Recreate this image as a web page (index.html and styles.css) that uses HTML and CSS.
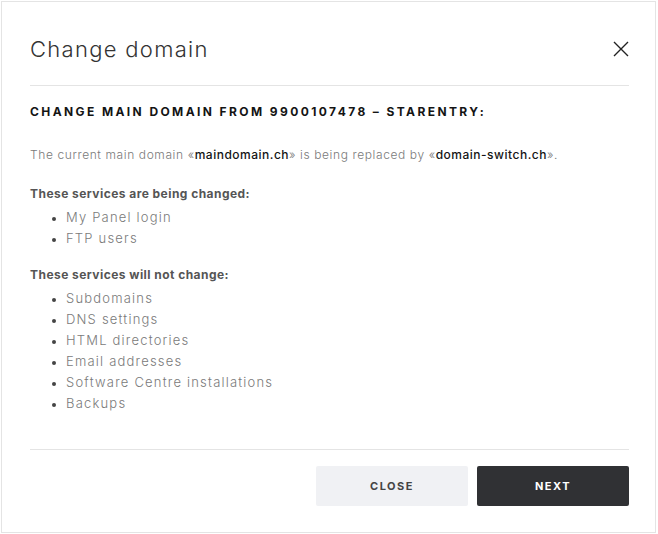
FILE: index.html
```html
<!DOCTYPE html>
<html lang="en">
<head>
  <meta charset="UTF-8" />
  <meta name="viewport" content="width=device-width, initial-scale=1.0"/>
  <title>Change domain</title>
  <link rel="stylesheet" href="styles.css">
</head>

<body>
  <div class="modal">
    <div class="modal-header">
      <h2 class="modal-title">Change domain</h2>
      <button class="modal-close" aria-label="Close">
        <svg width="16" height="16" viewBox="0 0 16 16">
          <path d="M1 1 L15 15 M15 1 L1 15" stroke="#222" stroke-width="1.4" fill="none"/>
        </svg>
      </button>
    </div>

    <div class="modal-body">
      <h3 class="section-title">Change main domain from 9900107478 – STARENTRY:</h3>
      <p class="intro">The current main domain «<strong>maindomain.ch</strong>» is being replaced by «<strong>domain-switch.ch</strong>».</p>

      <p class="group-title">These services are being changed:</p>
      <ul class="service-list">
        <li>My Panel login</li>
        <li>FTP users</li>
      </ul>

      <p class="group-title">These services will not change:</p>
      <ul class="service-list">
        <li>Subdomains</li>
        <li>DNS settings</li>
        <li>HTML directories</li>
        <li>Email addresses</li>
        <li>Software Centre installations</li>
        <li>Backups</li>
      </ul>
    </div>

    <div class="modal-footer">
      <button class="btn btn-light">Close</button>
      <button class="btn btn-dark">Next</button>
    </div>
  </div>
</body>
</html>
```

FILE: styles.css
```css
:root {
  --border: #e4e4e4;
  --text-dark: #141414;
  --text-muted: #7a7a7a;
  --text-label: #555;
  --btn-light: #f0f1f4;
  --btn-dark: #303134;
}

html, body {
  height: 100%;
}

body {
  margin: 0;
  padding: 1px 2px 1px 1px;
  box-sizing: border-box;
  background: #fff;
  font-family: Inter, "Liberation Sans", sans-serif;
}

.modal {
  height: 100%;
  box-sizing: border-box;
  border: 1px solid var(--border);
  padding: 0 26px 0 28px;
  display: flex;
  flex-direction: column;
}

/* Header */
.modal-header {
  display: flex;
  justify-content: space-between;
  align-items: center;
  padding: 33px 0 22px;
  border-bottom: 1px solid var(--border);
}

.modal-title {
  margin: 0;
  font-size: 22px;
  line-height: 28px;
  font-weight: 300;
  letter-spacing: 1.3px;
  color: #333;
}

.modal-close {
  background: none;
  border: none;
  padding: 0;
  width: 16px;
  height: 16px;
  cursor: pointer;
  display: flex;
}

/* Body */
.modal-body {
  padding-bottom: 35px;
  border-bottom: 1px solid var(--border);
}

.section-title {
  margin: 18px 0 0;
  font-size: 12px;
  line-height: 16px;
  font-weight: 700;
  letter-spacing: 2.4px;
  text-transform: uppercase;
  color: var(--text-dark);
}

.intro {
  margin: 26px 0 0;
  font-size: 12px;
  line-height: 18px;
  font-weight: 300;
  letter-spacing: 0.6px;
  color: var(--text-muted);
}

.intro strong {
  font-weight: 500;
  letter-spacing: 0.5px;
  color: var(--text-dark);
}

.group-title {
  margin: 21px 0 0;
  font-size: 12px;
  line-height: 18px;
  font-weight: 700;
  letter-spacing: 0.45px;
  color: var(--text-label);
}

.service-list + .group-title {
  margin-top: 17px;
}

.service-list {
  margin: 4px 0 0;
  padding-left: 36px;
  font-size: 13px;
  line-height: 21px;
  font-weight: 300;
  letter-spacing: 1.2px;
  color: var(--text-muted);
}

.service-list li::marker {
  color: #444;
  font-size: 11px;
}

/* Footer */
.modal-footer {
  display: flex;
  justify-content: flex-end;
  gap: 9px;
  padding: 16px 0 25px;
}

.btn {
  width: 152px;
  height: 40px;
  border: none;
  border-radius: 2px;
  font-family: Inter, "Liberation Sans", sans-serif;
  font-size: 11px;
  font-weight: 700;
  letter-spacing: 1.5px;
  text-transform: uppercase;
  cursor: pointer;
}

.btn-light {
  background: var(--btn-light);
  color: #444;
}

.btn-dark {
  background: var(--btn-dark);
  color: #fff;
}
```
